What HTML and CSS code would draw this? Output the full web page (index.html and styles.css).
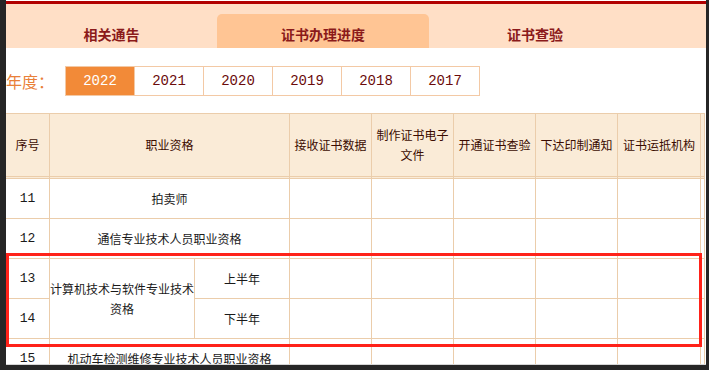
FILE: index.html
```html
<!DOCTYPE html>
<html lang="zh-CN">
<head>
<meta charset="utf-8">
<title>证书办理进度</title>
<link rel="stylesheet" href="styles.css">
</head>
<body>
<div class="page">
  <div class="tabs">
    <div class="tab first">相关通告</div>
    <div class="tab active">证书办理进度</div>
    <div class="tab">证书查验</div>
  </div>
  <div class="years">
    <div class="years-label">年度：</div>
    <div class="year active">2022</div>
    <div class="year">2021</div>
    <div class="year">2020</div>
    <div class="year">2019</div>
    <div class="year">2018</div>
    <div class="year">2017</div>
  </div>
  <table class="progress">
    <colgroup>
      <col class="c-no"><col class="c-name"><col class="c-half"><col class="c-step"><col class="c-step"><col class="c-step"><col class="c-step"><col class="c-last"><col class="c-edge">
    </colgroup>
    <thead>
      <tr class="head-row">
        <th>序号</th>
        <th colspan="2">职业资格</th>
        <th>接收证书数据</th>
        <th>制作证书电子文件</th>
        <th>开通证书查验</th>
        <th>下达印制通知</th>
        <th>证书运抵机构</th>
        <th></th>
      </tr>
    </thead>
    <tbody>
      <tr class="row">
        <td class="num">11</td>
        <td colspan="2">拍卖师</td>
        <td></td><td></td><td></td><td></td><td></td><td></td>
      </tr>
      <tr class="row">
        <td class="num">12</td>
        <td colspan="2">通信专业技术人员职业资格</td>
        <td></td><td></td><td></td><td></td><td></td><td></td>
      </tr>
      <tr class="row">
        <td class="num">13</td>
        <td rowspan="2" class="multi">计算机技术与软件专业技术资格</td>
        <td>上半年</td>
        <td></td><td></td><td></td><td></td><td></td><td></td>
      </tr>
      <tr class="row">
        <td class="num">14</td>
        <td>下半年</td>
        <td></td><td></td><td></td><td></td><td></td><td></td>
      </tr>
      <tr class="row">
        <td class="num">15</td>
        <td colspan="2">机动车检测维修专业技术人员职业资格</td>
        <td></td><td></td><td></td><td></td><td></td><td></td>
      </tr>
    </tbody>
  </table>
  <div class="highlight"></div>
</div>
</body>
</html>
```

FILE: styles.css
```css
html, body {
  margin: 0;
  padding: 0;
}
body {
  background: #262626;
  font-family: "Noto Sans CJK SC", "Noto Sans", sans-serif;
  height: 370px;
  overflow: hidden;
}
.page {
  position: relative;
  margin-left: 6px;
  width: 700px;
  height: 365px;
  box-sizing: border-box;
  padding-top: 1px;
  background: #fff;
  border-bottom: 1px solid #d6d6d6;
  overflow: hidden;
}
.tabs {
  display: flex;
  align-items: flex-end;
  height: 44px;
  border-top: 3px solid #b10000;
  background: #ffdfc6;
}
.tab {
  width: 212px;
  height: 34px;
  line-height: 40px;
  text-align: center;
  font-size: 14px;
  font-weight: bold;
  color: #8b1a1a;
}
.tab.first {
  width: 211px;
}
.tab.active {
  background: #ffc594;
  border-radius: 5px 5px 0 0;
}
.years {
  display: flex;
  align-items: center;
  height: 30px;
  margin-top: 18px;
}
.years-label {
  width: 59px;
  font-size: 16px;
  color: #e98039;
}
.year {
  width: 70px;
  height: 30px;
  box-sizing: border-box;
  border: 1px solid #f3c9a5;
  margin-left: -1px;
  display: flex;
  align-items: center;
  justify-content: center;
  font-family: "Liberation Mono", monospace;
  font-size: 14px;
  color: #6b0b0b;
}
.years-label + .year {
  margin-left: 0;
}
.year.active {
  background: #f28a38;
  color: #fff;
}
.progress {
  margin-top: 17px;
  margin-left: -1px;
  width: 700px;
  table-layout: fixed;
  border-collapse: separate;
  border-spacing: 0;
  border-top: 1px solid #ebcdab;
  border-left: 1px solid #ebcdab;
  font-size: 12px;
}
.c-no { width: 44px; }
.c-name { width: 145px; }
.c-half { width: 95px; }
.c-step { width: 82px; }
.c-last { width: 83px; }
.c-edge { width: 4px; }
.progress th,
.progress td {
  padding: 0;
  border-right: 1px solid #ebcdab;
  border-bottom: 1px solid #ebcdab;
  text-align: center;
  vertical-align: middle;
  line-height: 20px;
}
.progress th {
  background: #faebd7;
  font-weight: normal;
  color: #3b0b00;
  border-bottom: 3px double #ebcdab;
}
.head-row {
  height: 65px;
}
.row {
  height: 40px;
}
.progress td {
  color: #1a1a1a;
}
.progress td.num {
  font-family: "Liberation Mono", monospace;
  font-size: 13px;
}
.highlight {
  position: absolute;
  left: 0;
  top: 253px;
  width: 696px;
  height: 94px;
  box-sizing: border-box;
  border: 3px solid #ff2219;
}
```
